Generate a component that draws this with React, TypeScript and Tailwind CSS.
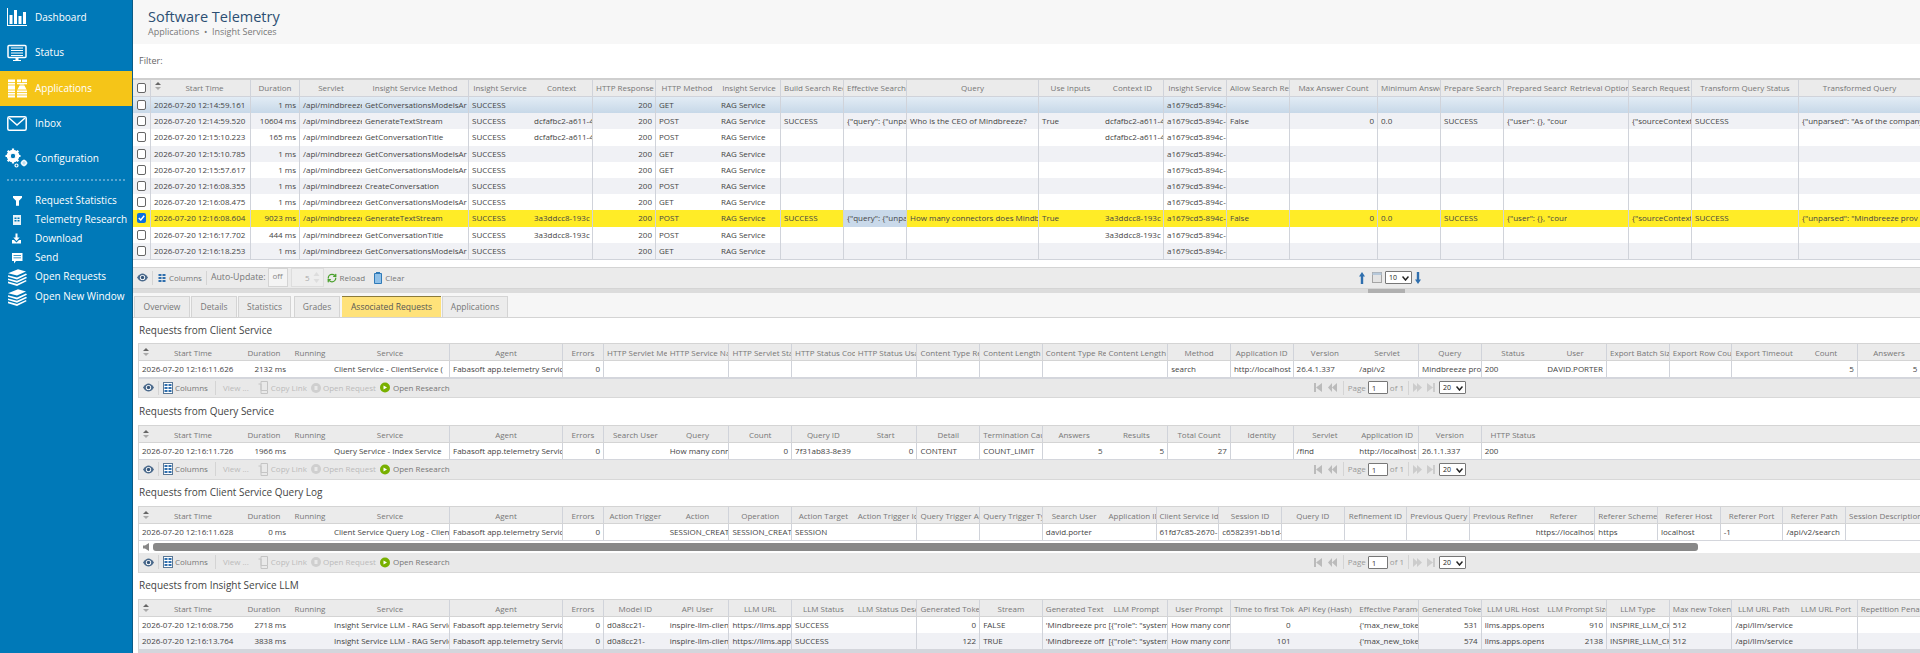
import React from "react";
import { RefreshCw } from "lucide-react";

type Col = { label: string; w: string; align?: "right"; sep?: boolean; head?: string };
type Row = { bg?: string; cells: (string | undefined)[]; blue?: number };

// Colonnes partagées par toutes les grilles du bas
const leadCols: Col[] = [
  { label: "Start Time", w: "w-[100px]", head: "pl-[11px]" },
  { label: "Duration", w: "w-[50px]", align: "right" },
  { label: "Running", w: "w-[42px]" },
  { label: "Service", w: "w-[119px]", sep: true },
  { label: "Agent", w: "w-[113px]", sep: true },
  { label: "Errors", w: "w-[41px]", align: "right", sep: true },
];

const col = (label: string, sep = false, align?: "right"): Col => ({ label, w: "w-[62.7px]", sep, align });

const mainCols: Col[] = [
  { label: "Start Time", w: "w-[100px]", sep: true, head: "pl-[11px]" },
  { label: "Duration", w: "w-[49px]", align: "right", sep: true },
  { label: "Servlet", w: "w-[62px]" },
  { label: "Insight Service Method", w: "w-[107px]", sep: true },
  { label: "Insight Service", w: "w-[62px]" },
  { label: "Context", w: "w-[62px]", sep: true },
  { label: "HTTP Response Code", w: "w-[63px]", align: "right", sep: true },
  { label: "HTTP Method", w: "w-[62px]" },
  { label: "Insight Service", w: "w-[63px]", sep: true },
  { label: "Build Search Request", w: "w-[63px]", sep: true },
  { label: "Effective Search", w: "w-[63px]", sep: true },
  { label: "Query", w: "w-[132px]", sep: true },
  { label: "Use Inputs", w: "w-[63px]" },
  { label: "Context ID", w: "w-[62px]", sep: true },
  { label: "Insight Service", w: "w-[63px]", sep: true },
  { label: "Allow Search Refinement", w: "w-[63px]", sep: true },
  { label: "Max Answer Count", w: "w-[88px]", align: "right", sep: true },
  { label: "Minimum Answer", w: "w-[63px]", sep: true },
  { label: "Prepare Search", w: "w-[63px]", sep: true },
  { label: "Prepared Search", w: "w-[63px]" },
  { label: "Retrieval Options", w: "w-[62px]", sep: true },
  { label: "Search Request", w: "w-[63px]", sep: true },
  { label: "Transform Query Status", w: "w-[107px]", sep: true },
  { label: "Transformed Query", w: "w-[121px]" },
];

const mainRow = (time: string, dur: string, method: string, ctx: string, verb: string, bg: string): Row => ({
  bg,
  cells: [time, dur, "/api/mindbreeze", method, "SUCCESS", ctx, "200", verb, "RAG Service", , , , , ctx, "a1679cd5-894c-"],
});

const askRow = (row: Row, query: string, parsed: string): Row => {
  const cells = [...row.cells];
  cells[9] = "SUCCESS";
  cells[10] = '{"query": {"unparsed"';
  cells[11] = query;
  cells[12] = "True";
  cells[15] = "False";
  cells[16] = "0";
  cells[17] = "0.0";
  cells[18] = "SUCCESS";
  cells[19] = '{"user": {}, "cour {}';
  cells[21] = '{"sourceContext"';
  cells[22] = "SUCCESS";
  cells[23] = parsed;
  return { ...row, cells };
};

const W = "bg-white";
const G = "bg-[#f0f1f5]";

const mainRows: Row[] = [
  mainRow("2026-07-20 12:14:59.161", "1 ms", "GetConversationsModelsAr", "", "GET", "bg-gradient-to-b from-[#e2ecf5] to-[#c7d8e8]"),
  askRow(mainRow("2026-07-20 12:14:59.520", "10604 ms", "GenerateTextStream", "dcfafbc2-a611-4", "POST", G), "Who is the CEO of Mindbreeze?", '{"unparsed": "As of the company'),
  mainRow("2026-07-20 12:15:10.223", "165 ms", "GetConversationTitle", "dcfafbc2-a611-4", "POST", W),
  mainRow("2026-07-20 12:15:10.785", "1 ms", "GetConversationsModelsAr", "", "GET", G),
  mainRow("2026-07-20 12:15:57.617", "1 ms", "GetConversationsModelsAr", "", "GET", W),
  mainRow("2026-07-20 12:16:08.355", "1 ms", "CreateConversation", "", "POST", G),
  mainRow("2026-07-20 12:16:08.475", "1 ms", "GetConversationsModelsAr", "", "GET", W),
  {
    ...askRow(mainRow("2026-07-20 12:16:08.604", "9023 ms", "GenerateTextStream", "3a3ddcc8-193c", "POST", "bg-[#ffec27]"), "How many connectors does Mindbreeze", '{"unparsed": "Mindbreeze prov'),
    blue: 10,
  },
  mainRow("2026-07-20 12:16:17.702", "444 ms", "GetConversationTitle", "3a3ddcc8-193c", "POST", W),
  mainRow("2026-07-20 12:16:18.253", "1 ms", "GetConversationsModelsAr", "", "GET", G),
];

const clientCols: Col[] = [
  ...leadCols,
  col("HTTP Servlet Method"), col("HTTP Service Name", true), col("HTTP Servlet Status", true), col("HTTP Status Code"), col("HTTP Status Usage", true),
  col("Content Type Request", true), col("Content Length", true), col("Content Type Response"), col("Content Length", true), col("Method", true),
  col("Application ID", true), col("Version"), col("Servlet", true), col("Query", true), col("Status"), col("User", true),
  col("Export Batch Size", true), col("Export Row Count", true), col("Export Timeout"), col("Count", true, "right"), col("Answers", false, "right"),
];

const queryCols: Col[] = [
  ...leadCols,
  col("Search User"), col("Query", true), col("Count", true, "right"), col("Query ID"), col("Start", true, "right"),
  col("Detail", true), col("Termination Cause", true), col("Answers", false, "right"), col("Results", true, "right"), col("Total Count", true, "right"),
  col("Identity", true), col("Servlet"), col("Application ID", true), col("Version", true), col("HTTP Status"),
];

const logCols: Col[] = [
  ...leadCols,
  col("Action Trigger"), col("Action", true), col("Operation", true), col("Action Target"), col("Action Trigger Id", true),
  col("Query Trigger Action", true), col("Query Trigger Type", true), col("Search User"),
  { label: "Application ID", w: "w-[51px]", sep: true },
  col("Client Service Id", true), col("Session ID", true), col("Query ID", true), col("Refinement ID", true), col("Previous Query", true),
  col("Previous Refinement"), col("Referer", true, "right"), col("Referer Scheme", true), col("Referer Host", true), col("Referer Port", true), col("Referer Path", true),
  { label: "Session Description", w: "w-[74px]" },
];

const llmCols: Col[] = [
  ...leadCols,
  col("Model ID"), col("API User", true), col("LLM URL", true), col("LLM Status"), col("LLM Status Description", true),
  col("Generated Tokens", true, "right"), col("Stream", true), col("Generated Text"), col("LLM Prompt", true), col("User Prompt", true),
  col("Time to first Token", false, "right"), col("API Key (Hash)"), col("Effective Parameters", true), col("Generated Tokens", true, "right"), col("LLM URL Host"),
  col("LLM Prompt Size", true, "right"), col("LLM Type", true), col("Max new Tokens", true), col("LLM URL Path"), col("LLM URL Port", true), col("Repetition Penalty"),
];

const clientRow: Row = {
  bg: W,
  cells: ["2026-07-20 12:16:11.626", "2132 ms", "", "Client Service - ClientService (", "Fabasoft app.telemetry Service", "0", , , , , , , , , , "search", "http://localhost", "26.4.1.337", "/api/v2", "Mindbreeze prod", "200", "DAVID.PORTER", , , , "5", "5"],
};
const queryRow: Row = {
  bg: W,
  cells: ["2026-07-20 12:16:11.726", "1966 ms", "", "Query Service - Index Service", "Fabasoft app.telemetry Service", "0", "", "How many connectors", "0", "7f31ab83-8e39", "0", "CONTENT", "COUNT_LIMIT", "5", "5", "27", "", "/find", "http://localhost", "26.1.1.337", "200"],
};
const logRow: Row = {
  bg: W,
  cells: ["2026-07-20 12:16:11.628", "0 ms", "", "Client Service Query Log - Client", "Fabasoft app.telemetry Service", "0", "", "SESSION_CREATE", "SESSION_CREATE", "SESSION", , , , "david.porter", "", "61fd7c85-2670-", "c6582391-bb1d-", , , , , "https://localhost", "https", "localhost", "-1", "/api/v2/search"],
};
const llmRows: Row[] = [
  {
    bg: W,
    cells: ["2026-07-20 12:16:08.756", "2718 ms", "", "Insight Service LLM - RAG Service", "Fabasoft app.telemetry Service", "0", "d0a8cc21-", "inspire-llm-client", "https://llms.apps", "SUCCESS", "", "0", "FALSE", "'Mindbreeze prov", '[{"role": "system', "How many connectors", "0", "", "{'max_new_toke", "531", "llms.apps.opens", "910", "INSPIRE_LLM_CHAT", "512", "/api/llm/service"],
  },
  {
    bg: G,
    cells: ["2026-07-20 12:16:13.764", "3838 ms", "", "Insight Service LLM - RAG Service", "Fabasoft app.telemetry Service", "0", "d0a8cc21-", "inspire-llm-client", "https://llms.apps", "SUCCESS", "", "122", "TRUE", "'Mindbreeze off", '[{"role": "system', "How many connectors", "101", "", "{'max_new_toke", "574", "llms.apps.opens", "2138", "INSPIRE_LLM_CHAT", "512", "/api/llm/service"],
  },
];

const Svg = ({ w, h, children, className = "" }: { w: number; h: number; children: React.ReactNode; className?: string }) => (
  <svg width={w} height={h} viewBox={`0 0 ${w} ${h}`} className={`shrink-0 overflow-visible ${className}`}>
    {children}
  </svg>
);

const stack = (
  <g fill="#fff" transform="translate(3 5) scale(1 0.8)">
    <path d="M15 -3.500 l8 3 -9 5 -9 -3z" />
    <path d="M5 4 l9 3 9 -5 1 1.500 -10 6 -9 -3.500z" />
    <path d="M5 8 l9 3 9 -5 1 1.500 -10 6 -9 -3.500z" />
    <path d="M5 12 l9 3 9 -5 0.500 1.500 -9.500 6 -9 -3.500z" />
  </g>
);

const sideTop = [
  {
    label: "Dashboard",
    icon: (
      <g fill="#fff">
        <path d="M7 8h1v17h19v1H7z" />
        <rect x="9.500" y="15" width="3" height="9" />
        <rect x="14" y="10" width="3" height="14" />
        <rect x="18.500" y="16" width="3" height="8" />
        <rect x="23" y="12" width="3" height="12" />
      </g>
    ),
  },
  {
    label: "Status",
    icon: (
      <g>
        <rect x="8" y="10.500" width="18" height="12" rx="1" fill="none" stroke="#fff" strokeWidth="1.500" />
        <path d="M11 13h12M11 15.500h12M11 18h12M11 20.500h12" stroke="#fff" strokeWidth="1" />
        <path d="M15.500 23h3v2h2.500v1h-8v-1h2.500z" fill="#fff" />
      </g>
    ),
  },
  {
    label: "Applications",
    active: true,
    icon: (
      <g fill="#fff">
        <rect x="8" y="8.500" width="7" height="18" />
        <rect x="17" y="8.500" width="10" height="18" />
        <path d="M8 11.500h19M8 14h19M8 19h19M8 21.500h19M8 24h19" stroke="#f5c518" strokeWidth="0.800" />
        <path d="M15.500 8h1.500v19h-1.500zM21 8h1v4h-1z" fill="#f5c518" />
        <path d="M17 13.500h3l-3 6zM27 13.500h-3l3 6z" fill="#f5c518" />
      </g>
    ),
  },
  {
    label: "Inbox",
    icon: (
      <g fill="none" stroke="#fff" strokeWidth="1.500">
        <rect x="7.800" y="10.800" width="18.400" height="13.500" rx="1.500" />
        <path d="M9 12l8 7 8-7" />
      </g>
    ),
  },
  {
    label: "Configuration",
    icon: (
      <g>
        <circle cx="13" cy="15" r="4.800" fill="none" stroke="#fff" strokeWidth="3" />
        <path d="M13 7.500v15M5.500 15h15M7.700 9.700l10.600 10.600M18.300 9.700L7.700 20.300" stroke="#fff" strokeWidth="2.200" />
        <circle cx="13" cy="15" r="2.200" fill="#0079b8" />
        <circle cx="24" cy="22" r="2.200" fill="none" stroke="#fff" strokeWidth="1.500" />
        <path d="M24 18.500v7M20.500 22h7" stroke="#fff" strokeWidth="1" />
        <circle cx="16.500" cy="24.500" r="1.500" fill="none" stroke="#fff" strokeWidth="1.200" />
      </g>
    ),
  },
];

const sideSub = [
  { label: "Request Statistics", icon: <path d="M13 5h9v1.800l-3 3v5h-3v-5l-3-3z" fill="#fff" /> },
  {
    label: "Telemetry Research",
    icon: <path d="M13 5h8v10h-8z M14.500 7.500v1.500h2V7.500z M17.500 7.500v1.500h2V7.500z M14.500 10v1.500h2V10z M17.500 10v1.500h2V10z" fill="#fff" fillRule="evenodd" opacity="0.9" />,
  },
  {
    label: "Download",
    icon: <path d="M15.500 4.500h2v4h2.200l-3.200 3.500-3.200-3.500h2.200zM12 11h2l2.500 2.500 2.500-2.500h2v3.500h-9z" fill="#fff" />,
  },
  {
    label: "Send",
    icon: <path d="M12 5h10.500v8H16l-2 2.500V13h-2z M13.500 7v.8h7.500V7z M13.500 9.500v.8h7.500v-.8z" fill="#fff" fillRule="evenodd" />,
  },
  { label: "Open Requests", icon: stack },
  { label: "Open New Window", icon: stack },
];

const Eye = () => (
  <Svg w={11} h={9}>
    <path d="M0 4.500C2 1.500 3.800 0.500 5.500 0.500S9 1.500 11 4.500C9 7.500 7.200 8.500 5.500 8.500S2 7.500 0 4.500z" fill="#4b6a8c" />
    <circle cx="5.500" cy="4.500" r="2.600" fill="#fff" />
    <circle cx="5.500" cy="4.500" r="1.700" fill="#35557a" />
  </Svg>
);

const ColumnsIcon = ({ boxed }: { boxed?: boolean }) => (
  <Svg w={10} h={12}>
    {boxed && <rect x="0.500" y="0.500" width="9" height="11" fill="#fff" stroke="#5a7896" />}
    <path d="M1.500 2h3v2h-3zM5.500 2h3v2h-3zM1.500 5h3v2h-3zM5.500 5h3v2h-3zM1.500 8h3v2h-3zM5.500 8h3v2h-3z" fill="#2f6fae" />
  </Svg>
);

const Sep = () => <div className="mx-[4px] h-[14px] w-px shrink-0 bg-[#d4d4d4]" />;

const Cell = ({ c, text, blue, header }: { c: Col; text?: string; blue?: boolean; header?: boolean }) => (
  <div
    className={`${c.w} h-full shrink-0 overflow-hidden whitespace-nowrap px-[3px] ${header ? `text-center ${c.head ?? ""}` : c.align === "right" ? "text-right" : "text-left"} ${c.sep ? "border-r border-[#d0d3da]" : ""} ${blue ? "bg-[#c9d9ea]" : ""}`}
  >
    {text}
  </div>
);

const SortArrows = () => (
  <Svg w={6} h={8} className="absolute top-[4px] left-[4px]">
    <path d="M3 0l3 3H0z" fill="#666" />
    <path d="M0 5h6L3 8z" fill="#aaa" />
  </Svg>
);

const DataGrid = ({ cols, rows }: { cols: Col[]; rows: Row[] }) => (
  <div className="flex flex-col text-[#444]">
    <div className="relative flex h-[18px] border-t border-b border-[#d4d4d4] bg-[#ebebeb] leading-[17px] text-[#777]">
      <SortArrows />
      {cols.map((c, i) => (
        <Cell key={i} c={c} text={c.label} header />
      ))}
    </div>
    {rows.map((r, i) => (
      <div key={i} className={`flex h-[16px] leading-[16px] ${r.bg}`}>
        {cols.map((c, j) => (
          <Cell key={j} c={c} text={r.cells[j]} />
        ))}
      </div>
    ))}
  </div>
);

const SelectBox = ({ value }: { value: string }) => (
  <div className="relative h-[13px] w-[27px] rounded-[1px] border border-[#777] bg-white pl-[3px] text-[7px] leading-[11px] text-[#222]">
    {value}
    <svg width="7" height="5" viewBox="0 0 7 5" className="absolute top-[4px] right-[2px]">
      <path d="M0.500 0.500L3.500 4 6.500 0.500" fill="none" stroke="#222" strokeWidth="1.500" />
    </svg>
  </div>
);

const Pager = () => (
  <div className="ml-auto mr-[454px] flex items-center text-[#999]">
    <Svg w={8} h={9} className="mr-[6px]">
      <path d="M0 0h2v9H0zM8 0v9L2 4.500z" fill="#bbb" />
    </Svg>
    <Svg w={9} h={9} className="mr-[2px]">
      <path d="M4 0v9L0 4.500zM9 0v9L4 4.500z" fill="#bbb" />
    </Svg>
    <Sep />
    <span className="text-[#999]">Page</span>
    <div className="mx-[2px] h-[13px] w-[20px] rounded-[1px] border border-[#777] bg-white pl-[3px] leading-[11px] text-[#444]">1</div>
    <span>of 1</span>
    <Sep />
    <Svg w={9} h={9} className="mr-[5px]">
      <path d="M0 0v9L5 4.500zM4 0v9L9 4.500z" fill="#ccc" />
    </Svg>
    <Svg w={8} h={9} className="mr-[4px]">
      <path d="M0 0v9L6 4.500zM6 0h2v9H6z" fill="#ccc" />
    </Svg>
    <SelectBox value="20" />
  </div>
);

const GridToolbar = ({ h = "h-[21px]" }: { h?: string }) => (
  <div className={`flex ${h} items-center border-b border-[#d8d8d8] bg-[#e9e9e9] pl-[4px] text-[#777]`}>
    <Eye />
    <Sep />
    <ColumnsIcon boxed />
    <span className="ml-[2px]">Columns</span>
    <div className="mx-[7px] h-[14px] w-px bg-[#d4d4d4]" />
    <span className="text-[#bbb]">View ...</span>
    <svg width="10" height="13" viewBox="0 0 10 13" className="ml-[9px] shrink-0">
      <path d="M3 .5h6.500v9H3zM.5 3H3v9.500h6.500V9.500" fill="none" stroke="#c4c4c4" />
    </svg>
    <span className="ml-[3px] text-[#bbb]">Copy Link</span>
    <svg width="10" height="10" viewBox="0 0 10 10" className="ml-[4px] shrink-0">
      <circle cx="5" cy="5" r="5" fill="#cfcfcf" />
      <path d="M3.500 3h3v4h-3z" fill="#e9e9e9" />
    </svg>
    <span className="ml-[2px] text-[#bbb]">Open Request</span>
    <svg width="10" height="11" viewBox="0 0 10 11" className="ml-[4px] shrink-0">
      <circle cx="5" cy="5.500" r="5" fill="#78b000" />
      <path d="M3.500 3.500l3.500 2-3.500 2z" fill="#fff" />
    </svg>
    <span className="ml-[3px]">Open Research</span>
    <Pager />
  </div>
);

const Section = ({
  title,
  cols,
  rows,
  space = "h-[26px]",
  children,
}: {
  title: string;
  cols: Col[];
  rows: Row[];
  space?: string;
  children?: React.ReactNode;
}) => (
  <section>
    <h2 className={`flex ${space} items-center pl-[6px] text-[10px] font-normal text-[#444]`}>{title}</h2>
    <div className="ml-[5px] border-l border-[#d4d4d4]">
      <DataGrid cols={cols} rows={rows} />
      {children}
    </div>
  </section>
);

const tabs = ["Overview", "Details", "Statistics", "Grades", "Associated Requests", "Applications"];
const tabW = ["w-[56px]", "w-[46px]", "w-[53px] mr-[2px]", "w-[46px] mr-[1px]", "w-[99px]", "w-[66px]"];

export default function App() {
  return (
    <div className="flex h-[653px] w-[1920px] overflow-hidden bg-white font-['Open_Sans',sans-serif] text-[8px]">
      <aside className="w-[133px] shrink-0 border-r border-[#0a5c88] bg-[#0079b8] text-[10px] text-white">
        {sideTop.map((item) => (
          <div key={item.label} className={`flex h-[35.3px] items-center ${item.active ? "bg-[#f5c518]" : ""}`}>
            <Svg w={35} h={35}>{item.icon}</Svg>
            <span>{item.label}</span>
          </div>
        ))}
        <div className="mx-[7px] mt-[2.500px] mb-[9.500px] border-t-2 border-dotted border-[#5aa5d0]" />
        {sideSub.map((item) => (
          <div key={item.label} className="flex h-[19.2px] items-center">
            <Svg w={35} h={19}>{item.icon}</Svg>
            <span>{item.label}</span>
          </div>
        ))}
      </aside>

      <main className="flex min-w-0 flex-1 flex-col overflow-hidden">
        <header className="h-[44px] shrink-0 bg-[#f7f7f7] pt-[8px] pl-[15px]">
          <h1 className="text-[14.500px] leading-[18px] font-normal text-[#2c4f73]">Software Telemetry</h1>
          <p className="text-[9px] leading-[12px] text-[#777]">Applications &nbsp;•&nbsp; Insight Services</p>
        </header>

        <div className="flex h-[34px] shrink-0 items-center pl-[6px] text-[9px] text-[#666]">Filter:</div>

        <div className="shrink-0 border-t-2 border-[#cfcfcf]">
          <div className="relative flex h-[17px] border-b border-[#d0d3da] bg-[#ebebeb] leading-[16px] text-[#777]">
            <div className="flex h-full w-[18px] shrink-0 items-center justify-center border-r border-[#d0d3da]">
              <div className="h-[10px] w-[9px] rounded-[2px] border border-[#666] bg-white" />
            </div>
            <Svg w={6} h={8} className="absolute top-[2px] left-[22px]">
              <path d="M3 0l3 3H0z" fill="#666" />
              <path d="M0 5h6L3 8z" fill="#aaa" />
            </Svg>
            {mainCols.map((c, i) => (
              <Cell key={i} c={c} text={c.label} header />
            ))}
          </div>
          {mainRows.map((r, i) => (
            <div key={i} className={`flex h-[16.2px] leading-[16px] text-[#444] ${r.bg}`}>
              <div className="flex h-full w-[18px] shrink-0 items-center justify-center border-r border-[#d0d3da]">
                {r.blue ? (
                  <div className="flex h-[10px] w-[9px] items-center justify-center rounded-[2px] bg-[#0b6fe0]">
                    <svg width="7" height="6" viewBox="0 0 7 6">
                      <path d="M.8 3l2 2L6.200 .8" fill="none" stroke="#fff" strokeWidth="1.400" />
                    </svg>
                  </div>
                ) : (
                  <div className="h-[10px] w-[9px] rounded-[2px] border border-[#666] bg-white" />
                )}
              </div>
              {mainCols.map((c, j) => (
                <Cell key={j} c={c} text={r.cells[j]} blue={r.blue === j} />
              ))}
            </div>
          ))}
          <div className="h-px bg-[#d0d3da]" />
        </div>

        <div className="mt-[7px] flex h-[22px] shrink-0 items-center border-y border-[#d4d4d4] bg-[#ebebeb] pl-[4px] text-[#777]">
          <Eye />
          <Sep />
          <ColumnsIcon />
          <span className="ml-[2px]">Columns</span>
          <Sep />
          <span className="text-[8.800px]">Auto-Update:</span>
          <div className="ml-[2px] h-[19px] w-[20px] border border-[#d4d4d4] bg-[#f4f4f4] text-center leading-[14px] text-[#888]">off</div>
          <div className="relative ml-[3px] h-[19px] w-[33px] border border-[#ddd] bg-[#eee] pr-[13px] text-right leading-[18px] text-[#aaa]">
            5
            <svg width="7" height="13" viewBox="0 0 7 13" className="absolute top-[2px] right-[3px]">
              <path d="M3.500 1L6.500 5H.5zM.5 8h6l-3 4z" fill="#ddd" />
            </svg>
          </div>
          <RefreshCw size={10} strokeWidth={3} className="ml-[3px] shrink-0 text-[#4aa02c]" />
          <span className="ml-[3px]">Reload</span>
          <svg width="8" height="12" viewBox="0 0 8 12" className="ml-[9px] shrink-0">
            <path d="M2 .5h4M.5 1.500h7v10h-7z" fill="#8fc0e8" stroke="#2f7ab8" />
          </svg>
          <span className="ml-[3px]">Clear</span>
          <div className="ml-auto mr-[499px] flex items-center">
            <svg width="6" height="12" viewBox="0 0 6 12" className="shrink-0">
              <path d="M3 0l3 4.500H4.200V12H1.800V4.500H0z" fill="#2f6fae" />
            </svg>
            <svg width="10" height="11" viewBox="0 0 10 11" className="ml-[7px] shrink-0">
              <rect x=".5" y=".5" width="9" height="10" fill="#e4e4e4" stroke="#a5a5a5" />
              <rect x=".5" y=".5" width="9" height="2.500" fill="#b6c8da" />
            </svg>
            <div className="mx-[3px]">
              <SelectBox value="10" />
            </div>
            <svg width="6" height="12" viewBox="0 0 6 12" className="shrink-0">
              <path d="M3 12l3-4.500H4.200V0H1.800v7.500H0z" fill="#2f6fae" />
            </svg>
          </div>
        </div>

        <div className="relative h-[4px] shrink-0 bg-[#dcdcdc]">
          <div className="absolute top-0 left-[1235px] h-full w-[37px] bg-[#b0b0b0]" />
        </div>

        <nav className="flex h-[25px] shrink-0 items-end gap-[1px] border-b border-[#d4d4d4] bg-[#f6f6f6] pl-[1px] text-[8.500px] text-[#777]">
          {tabs.map((t, i) => (
            <div
              key={t}
              className={`h-[21px] text-center leading-[19px] ${tabW[i]} ${t === "Associated Requests" ? "border-t border-[#8b7a3a] bg-[#ffe27a] text-[#555]" : "border border-b-0 border-[#d4d4d4] bg-[#ececec]"}`}
            >
              {t}
            </div>
          ))}
        </nav>

        <Section title="Requests from Client Service" cols={clientCols} rows={[clientRow]} space="h-[25px]">
          <div className="h-[2px] bg-[#d4d6dc]" />
          <GridToolbar h="h-[19px]" />
        </Section>
        <Section title="Requests from Query Service" cols={queryCols} rows={[queryRow]} space="h-[27px]">
          <div className="h-px bg-[#d4d6dc]" />
          <GridToolbar h="h-[20px]" />
        </Section>
        <Section title="Requests from Client Service Query Log" cols={logCols} rows={[logRow]}>
          <div className="flex h-[13px] items-center border-t border-[#d4d6dc]">
            <svg width="6" height="8" viewBox="0 0 6 8" className="ml-[4px] shrink-0">
              <path d="M0 2.500h2L6 0v8L2 5.500H0z" fill="#888" />
            </svg>
            <div className="ml-[4px] h-[8px] w-[1545px] rounded-[3px] bg-[#888]" />
          </div>
          <GridToolbar h="h-[20px]" />
        </Section>
        <Section title="Requests from Insight Service LLM" cols={llmCols} rows={llmRows}>
          <div className="h-[4px] bg-[#d4d6dc]" />
        </Section>
      </main>
    </div>
  );
}
